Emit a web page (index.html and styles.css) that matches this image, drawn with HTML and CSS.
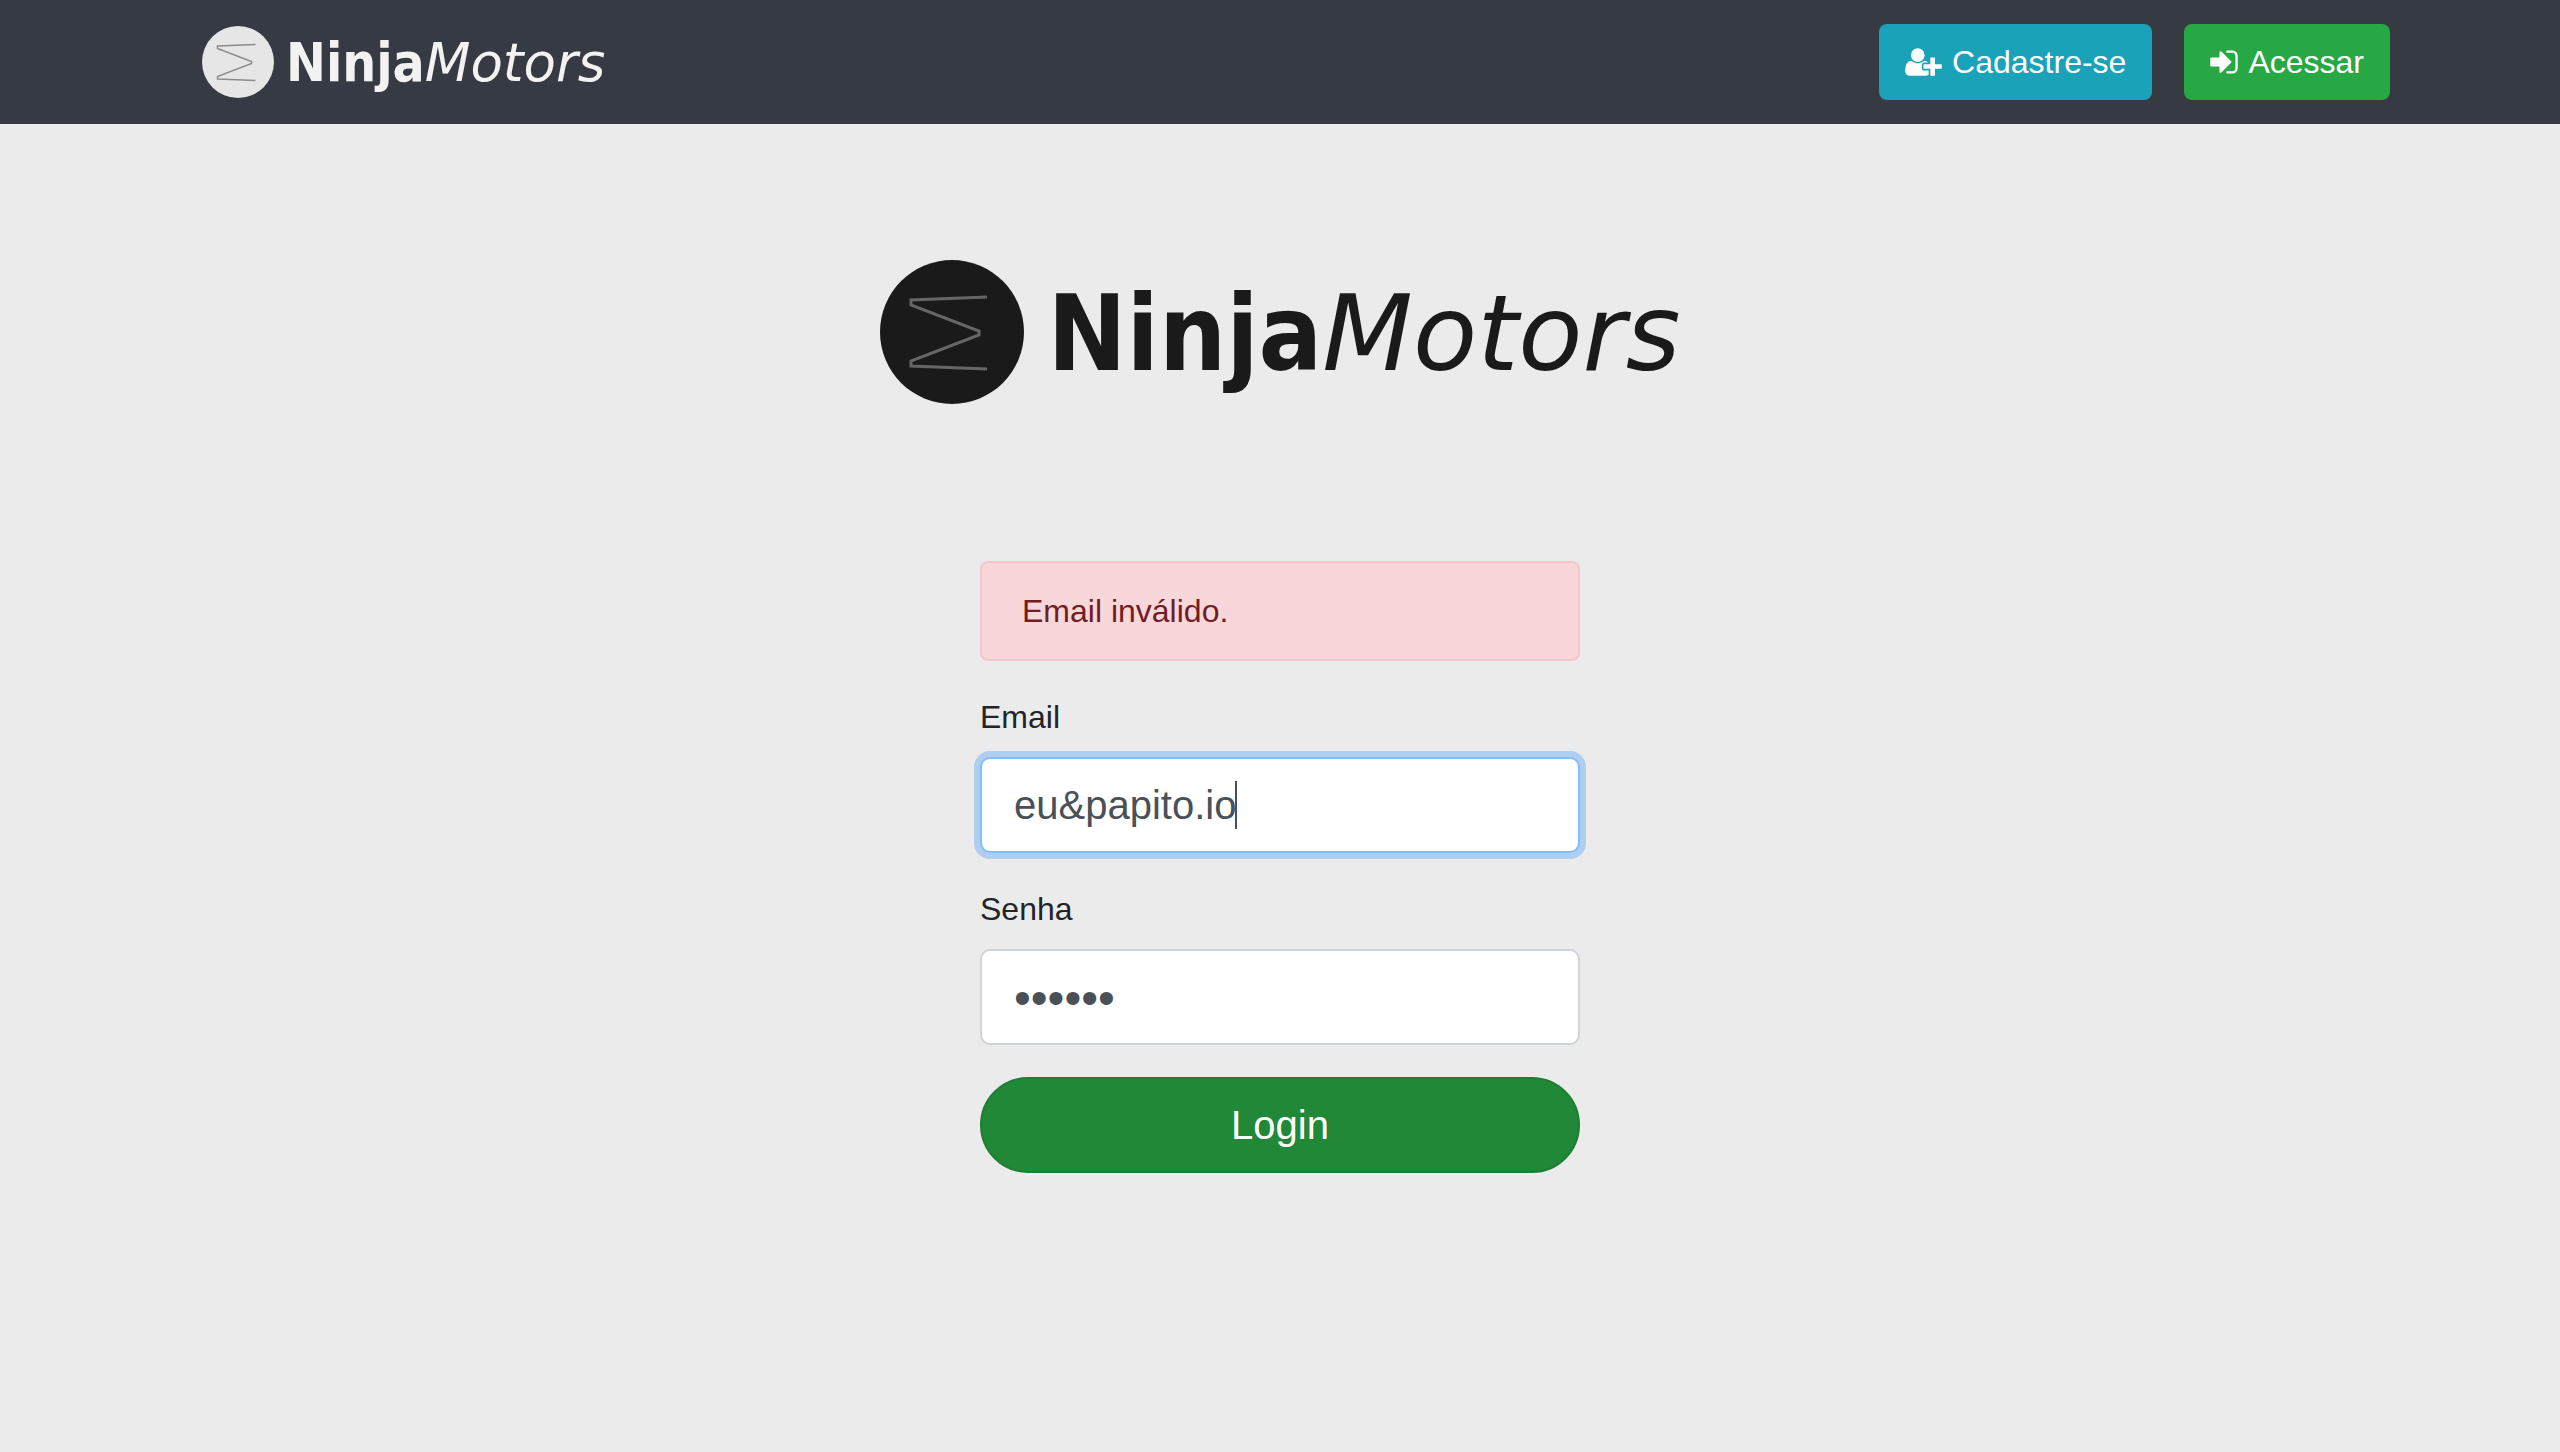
FILE: index.html
```html
<!DOCTYPE html>
<html lang="pt-BR">
<head>
  <meta charset="utf-8">
  <meta name="viewport" content="width=device-width, initial-scale=1">
  <title>NinjaMotors</title>
  <link rel="stylesheet" href="styles.css">
</head>
<body>
  <header class="navbar">
    <div class="container">
      <a class="brand" href="#">
        <svg class="brand-mark" viewBox="0 0 144 144" aria-hidden="true">
          <circle class="mark-disc" cx="72" cy="72" r="72"/>
          <path class="mark-line" d="M107 37 L31 40 V45 L99 71 V75 L31 101 V106 L107 109"/>
        </svg>
        <span class="brand-name"><b>Ninja</b><i>Motors</i></span>
      </a>
      <nav class="actions">
        <a class="btn btn-info" href="#">
          <svg class="icon icon-wide" viewBox="0 0 2048 1792" aria-hidden="true"><path d="M704 896q-159 0-271.500-112.500t-112.500-271.500 112.500-271.500 271.500-112.500 271.500 112.500 112.500 271.500-112.500 271.500-271.500 112.500zm960 128h352q13 0 22.500 9.500t9.500 22.500v192q0 13-9.500 22.500t-22.500 9.500h-352v352q0 13-9.500 22.500t-22.500 9.500h-192q-13 0-22.500-9.500t-9.500-22.500v-352h-352q-13 0-22.500-9.500t-9.500-22.500v-192q0-13 9.500-22.500t22.500-9.500h352v-352q0-13 9.500-22.500t22.500-9.500h192q13 0 22.500 9.500t9.500 22.500v352zm-736 224q0 52 38 90t90 38h256v238q-68 50-171 50h-874q-121 0-194-69t-73-190q0-53 3.500-103.500t14-109 26.500-108.500 43-97.500 62-81 85.500-53.500 111.500-20q19 0 39 17 79 61 154.500 91.500t164.500 30.500 164.500-30.500 154.500-91.500q20-17 39-17 132 0 217 96h-223q-52 0-90 38t-38 90v192z"/></svg>
          <span>Cadastre-se</span>
        </a>
        <a class="btn btn-success" href="#">
          <svg class="icon" viewBox="0 0 1536 1792" aria-hidden="true"><path d="M1184 896q0 26-19 45l-544 544q-19 19-45 19t-45-19-19-45v-288h-448q-26 0-45-19t-19-45v-384q0-26 19-45t45-19h448v-288q0-26 19-45t45-19 45 19l544 544q19 19 19 45zm352-352v704q0 119-84.500 203.500t-203.500 84.500h-320q-13 0-22.500-9.500t-9.500-22.500q0-4-1-20t-.5-26.500 3-23.500 10-19.500 20.500-6.500h320q66 0 113-47t47-113v-704q0-66-47-113t-113-47h-312l-11.500-1-11.500-3-8-5.500-7-9-2-13.500q0-4-1-20t-.5-26.500 3-23.500 10-19.500 20.500-6.500h320q119 0 203.500 84.500t84.500 203.500z"/></svg>
          <span>Acessar</span>
        </a>
      </nav>
    </div>
  </header>

  <main class="login">
    <h1 class="brand brand-large">
      <svg class="brand-mark" viewBox="0 0 144 144" aria-hidden="true">
        <circle class="mark-disc" cx="72" cy="72" r="72"/>
        <path class="mark-line" d="M107 37 L31 40 V45 L99 71 V75 L31 101 V106 L107 109"/>
      </svg>
      <span class="brand-name"><b>Ninja</b><i>Motors</i></span>
    </h1>
    <form class="login-form">
      <div class="alert" role="alert">Email inválido.</div>
      <div class="field">
        <label for="email">Email</label>
        <div class="control">
          <input class="input input-active" id="email" type="text" value="eu&amp;papito.io">
          <span class="caret" aria-hidden="true"></span>
        </div>
      </div>
      <div class="field">
        <label for="password">Senha</label>
        <input class="input input-password" id="password" type="password" value="123456">
      </div>
      <button class="submit" type="button">Login</button>
    </form>
  </main>
</body>
</html>
```
FILE: styles.css
```css
* {
  box-sizing: border-box;
}

body {
  margin: 0;
  background: #ebebeb;
  color: #212529;
  font: 400 32px/48px "Liberation Sans", Arial, sans-serif;
}

.navbar {
  padding: 24px 0;
  background: #363a42;
}

.container {
  display: flex;
  align-items: center;
  justify-content: space-between;
  max-width: 2280px;
  margin: 0 auto;
  padding: 0 30px;
}

.brand {
  display: flex;
  align-items: center;
  gap: 12px;
  margin: 0 0 0 32px;
  color: #f2f2f2;
  text-decoration: none;
}

.brand-mark {
  flex: none;
  width: 72px;
}

.mark-disc {
  fill: #e6e6e6;
}

.mark-line {
  fill: none;
  stroke: #8c8c8c;
  stroke-width: 3;
}

.brand-name {
  padding-top: 2px;
  font: 400 53px/64px "DejaVu Sans", sans-serif;
  white-space: nowrap;
}

.brand-name b {
  font-family: "DejaVu Sans Condensed", "DejaVu Sans", sans-serif;
  font-weight: 700;
}

.brand-large {
  justify-content: center;
  gap: 24px;
  margin: 0;
  color: #1a1a1a;
}

.brand-large .brand-mark {
  width: 144px;
}

.brand-large .mark-disc {
  fill: #1a1a1a;
}

.brand-large .mark-line {
  stroke: #666;
}

.brand-large .brand-name {
  padding-top: 4px;
  font-size: 105px;
  line-height: 128px;
}

.actions {
  display: flex;
  gap: 32px;
}

.btn {
  display: flex;
  align-items: center;
  gap: 10px;
  padding: 14px 26px;
  border-radius: 8px;
  color: #fff;
  text-decoration: none;
}

.btn-info {
  background: #1aa2b9;
}

.btn-success {
  background: #28a745;
}

.icon {
  width: 28px;
  height: 32px;
  fill: currentColor;
}

.icon-wide {
  width: 37px;
}

.login {
  padding: 136px 30px;
}

.login-form {
  display: flex;
  flex-direction: column;
  gap: 32px;
  max-width: 600px;
  margin: 157px auto 0;
}

.alert {
  padding: 24px 40px;
  border: 2px solid #f5c6cb;
  border-radius: 8px;
  background: #f8d7da;
  color: #721c24;
}

.field {
  display: flex;
  flex-direction: column;
  gap: 16px;
}

.control {
  position: relative;
}

.input {
  display: block;
  width: 100%;
  height: 96px;
  padding: 16px 32px;
  border: 2px solid #ced4da;
  border-radius: 10px;
  outline: 0;
  background: #fff;
  color: #495057;
  font: inherit;
  font-size: 40px;
  line-height: 60px;
}

.input-password {
  font-size: 48px;
}

.input-active {
  border-color: #80bdff;
  box-shadow: 0 0 0 6px rgba(0, 123, 255, 0.25);
}

.caret {
  position: absolute;
  top: 24px;
  left: 255px;
  width: 2px;
  height: 48px;
  background: #495057;
}

.submit {
  height: 96px;
  padding: 0 32px;
  border: 2px solid #1e7e34;
  border-radius: 48px;
  background: #218838;
  color: #fff;
  font: inherit;
  font-size: 40px;
  line-height: 60px;
}
```
